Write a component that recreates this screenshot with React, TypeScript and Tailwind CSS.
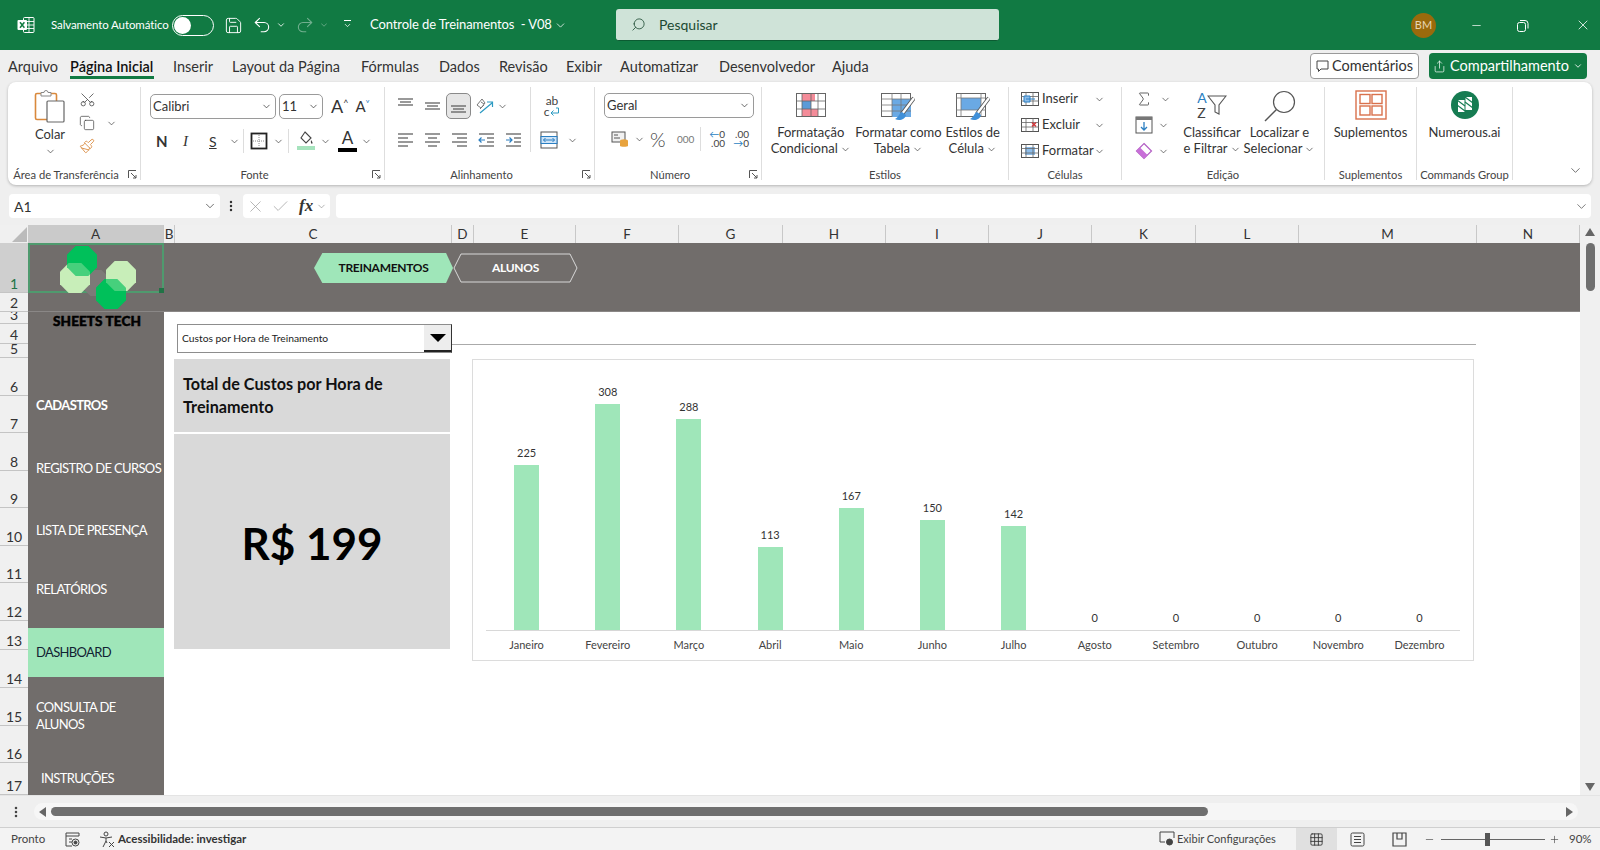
import {
  Check,
  ChevronDown,
  Copy,
  Grid3x3,
  Minus,
  MoreVertical,
  Paintbrush,
  Plus,
  Redo2,
  Save,
  Scissors,
  Search,
  Share,
  Sigma,
  Undo2,
  X,
} from "lucide-react";

const tabs = [
  { label: "Arquivo", width: "w-[62px]" },
  { label: "Página Inicial", width: "w-[103px]", active: true },
  { label: "Inserir", width: "w-[59px]" },
  { label: "Layout da Página", width: "w-[129px]" },
  { label: "Fórmulas", width: "w-[78px]" },
  { label: "Dados", width: "w-[60px]" },
  { label: "Revisão", width: "w-[67px]" },
  { label: "Exibir", width: "w-[54px]" },
  { label: "Automatizar", width: "w-[99px]" },
  { label: "Desenvolvedor", width: "w-[113px]" },
  { label: "Ajuda", width: "w-[56px]" },
];

const columns = [
  { name: "A", width: "w-[136px]", active: true },
  { name: "B", width: "w-[11px]" },
  { name: "C", width: "w-[277px]" },
  { name: "D", width: "w-[22px]" },
  { name: "E", width: "w-[102px]" },
  { name: "F", width: "w-[103px]" },
  { name: "G", width: "w-[104px]" },
  { name: "H", width: "w-[103px]" },
  { name: "I", width: "w-[103px]" },
  { name: "J", width: "w-[103px]" },
  { name: "K", width: "w-[104px]" },
  { name: "L", width: "w-[103px]" },
  { name: "M", width: "w-[178px]" },
  { name: "N", width: "w-[103px]" },
];

const rows = [
  { n: 1, h: "h-[50px]" },
  { n: 2, h: "h-[19px]" },
  { n: 3, h: "h-[12px]" },
  { n: 4, h: "h-[20px]" },
  { n: 5, h: "h-[14px]" },
  { n: 6, h: "h-[38px]" },
  { n: 7, h: "h-[37px]" },
  { n: 8, h: "h-[38px]" },
  { n: 9, h: "h-[37px]" },
  { n: 10, h: "h-[38px]" },
  { n: 11, h: "h-[37px]" },
  { n: 12, h: "h-[38px]" },
  { n: 13, h: "h-[29px]" },
  { n: 14, h: "h-[38px]" },
  { n: 15, h: "h-[38px]" },
  { n: 16, h: "h-[37px]" },
  { n: 17, h: "h-[32px]" },
];

const months = [
  { name: "Janeiro", value: 225 },
  { name: "Fevereiro", value: 308 },
  { name: "Março", value: 288 },
  { name: "Abril", value: 113 },
  { name: "Maio", value: 167 },
  { name: "Junho", value: 150 },
  { name: "Julho", value: 142 },
  { name: "Agosto", value: 0 },
  { name: "Setembro", value: 0 },
  { name: "Outubro", value: 0 },
  { name: "Novembro", value: 0 },
  { name: "Dezembro", value: 0 },
];

function Chev({ className = "text-[#444]" }: { className?: string }) {
  return <ChevronDown size={11} strokeWidth={1.6} className={`shrink-0 ${className}`} />;
}

// short horizontal strokes, used by all the alignment buttons: [x1, x2, y]
function Lines({ segs, arrow }: { segs: number[][]; arrow?: string }) {
  return (
    <svg width="17" height="16" viewBox="0 0 17 16" fill="none" stroke="#555" strokeWidth="1.2">
      {segs.map(([a, b, y]) => (
        <line key={y} x1={a} x2={b} y1={y} y2={y} />
      ))}
      {arrow ? <path d={arrow} stroke="#2b7fc2" strokeWidth="1.2" /> : null}
    </svg>
  );
}

function ExcelLogo() {
  return (
    <svg width="18" height="18" viewBox="0 0 18 18">
      <rect x="6.5" y="1.5" width="10.5" height="15" rx="1" fill="none" stroke="#fff" />
      <path d="M7 5.5h10M7 9h10M7 12.5h10M12 2v14" stroke="#fff" strokeWidth="0.9" />
      <rect x="0.5" y="4" width="9.5" height="10" rx="1" fill="#fff" />
      <path d="M3 6.2l4.4 5.6M7.4 6.2L3 11.8" stroke="#107c41" strokeWidth="1.5" />
    </svg>
  );
}

function PasteIcon() {
  return (
    <svg width="32" height="34" viewBox="0 0 32 34" fill="none">
      <rect x="1.5" y="4.5" width="21" height="26" rx="1.5" stroke="#d9893c" strokeWidth="1.6" fill="#fff" />
      <path d="M7 7V3.5h3a2 2 0 014 0h3V7z" stroke="#888" fill="#fff" />
      <rect x="13" y="12" width="17" height="21" rx="1" stroke="#666" strokeWidth="1.2" fill="#fff" />
    </svg>
  );
}

function BorderIcon() {
  return (
    <svg width="18" height="18" viewBox="0 0 18 18" fill="none">
      <rect x="1.5" y="1.5" width="15" height="15" stroke="#222" strokeWidth="1.8" />
      <path d="M9 3v12M3 9h12" stroke="#888" strokeDasharray="1 1" />
    </svg>
  );
}

function FillIcon() {
  return (
    <svg width="18" height="20" viewBox="0 0 18 20" fill="none">
      <path d="M8 1l6 6-5 5-5-5z" stroke="#444" strokeWidth="1.1" />
      <path d="M14 9c1 1.5 2 2.6 1.4 3.4-.6.7-2 .3-1.4-3.4z" fill="#444" />
      <rect x="0" y="15" width="18" height="4" fill="#a6e3bd" />
    </svg>
  );
}

function FontColorIcon() {
  return (
    <div className="flex h-[22px] w-[19px] flex-col items-center">
      <span className="text-[17px] leading-[16px] text-[#333]">A</span>
      <span className="mt-[2px] h-[4px] w-full bg-black" />
    </div>
  );
}

function OrientIcon() {
  return (
    <svg width="18" height="18" viewBox="0 0 18 18" fill="none">
      <path d="M1 8l5-6 3 4-4 5zM5 5l3 2M4 12l4-4" stroke="#777" strokeWidth="1" />
      <path d="M4 16L16 6M11 5h5.500v5" stroke="#2b9ac2" strokeWidth="1.2" />
    </svg>
  );
}

function WrapIcon() {
  return (
    <div className="flex flex-col items-center text-[12px] leading-[11px] text-[#444]">
      <span>ab</span>
      <span className="flex items-center">
        c
        <svg width="11" height="10" viewBox="0 0 11 10" fill="none">
          <path d="M7 1h2.500v5H2M4.500 3.500L2 6l2.500 2.500" stroke="#2b9ac2" />
        </svg>
      </span>
    </div>
  );
}

function MergeIcon() {
  return (
    <svg width="18" height="18" viewBox="0 0 18 18" fill="none">
      <rect x="1" y="1" width="16" height="16" stroke="#555" />
      <rect x="1" y="5.5" width="16" height="7" fill="#cfe4f7" stroke="#2b7fc2" />
      <path d="M3.5 9h11M5.5 7l-2 2 2 2M12.5 7l2 2-2 2" stroke="#2b7fc2" />
    </svg>
  );
}

function CurrencyIcon() {
  return (
    <svg width="18" height="18" viewBox="0 0 18 18" fill="none">
      <rect x="1" y="2" width="13" height="10" stroke="#555" fill="#f1f1f1" />
      <path d="M3 5h4M3 8h6" stroke="#555" />
      <ellipse cx="13" cy="11" rx="4" ry="1.8" fill="#e8a33d" />
      <path d="M9 11v5c0 1 8 1 8 0v-5" fill="#e8a33d" />
    </svg>
  );
}

function DecimalIcon({ flip }: { flip?: boolean }) {
  return (
    <div className="flex flex-col text-[10px] leading-[9px] text-[#444]">
      <span className="flex items-center justify-end">
        {flip ? ".00" : <><span className="text-[#2b7fc2]">←</span>0</>}
      </span>
      <span className="flex items-center justify-end">
        {flip ? <><span className="text-[#2b7fc2]">→</span>0</> : ".00"}
      </span>
    </div>
  );
}

function CondFormatIcon() {
  return (
    <svg width="30" height="24" viewBox="0 0 30 24" fill="none" className="mt-[3px]">
      <rect x="0.5" y="0.5" width="29" height="23" fill="#fff" stroke="#666" />
      <rect x="6" y="1" width="13" height="7" fill="#f48c99" />
      <rect x="6" y="8" width="9" height="8" fill="#5b9bd8" />
      <rect x="6" y="16" width="16" height="7" fill="#f48c99" />
      <path d="M0 8h30M0 16h30M6 0v24M15 0v24M22 0v24" stroke="#666" strokeWidth="0.8" />
    </svg>
  );
}

function Brush() {
  return (
    <>
      <path d="M33 5L21 21" stroke="#555" strokeWidth="4" />
      <path d="M33 5L21 21" stroke="#fff" strokeWidth="2.4" />
      <path d="M21 19c-3 1-3 5-7 7 4 2 10 1 11-4z" fill="#3f8fd8" />
    </>
  );
}

function TableIcon() {
  return (
    <svg width="34" height="28" viewBox="0 0 34 28" fill="none" className="mt-[3px]">
      <rect x="0.5" y="0.5" width="29" height="23" fill="#fff" stroke="#666" />
      <rect x="11" y="6" width="19" height="18" fill="#6aa9e4" />
      <path d="M0 6h30M0 12h30M0 18h30M11 0v24M20 0v24" stroke="#777" strokeWidth="0.8" />
      <Brush />
    </svg>
  );
}

function CellStyleIcon() {
  return (
    <svg width="34" height="28" viewBox="0 0 34 28" fill="none" className="mt-[3px]">
      <rect x="0.5" y="0.5" width="29" height="23" fill="#fff" stroke="#666" />
      <rect x="5" y="5" width="20" height="12" fill="#6aa9e4" />
      <path d="M0 5h30M5 0v24M25 0v24M0 17h30" stroke="#777" strokeWidth="0.8" />
      <Brush />
    </svg>
  );
}

function CellOpIcon({ kind }: { kind: "insert" | "delete" | "format" }) {
  return (
    <svg width="18" height="18" viewBox="0 0 18 18" fill="none">
      <rect x="0.5" y="2.500" width="17" height="13" fill="#fff" stroke="#555" />
      {kind === "format" ? <rect x="4" y="5" width="10" height="8" fill="#8dbdea" /> : null}
      <path d="M0 6.500h18M0 11h18M5 2v14M12 2v14" stroke="#666" strokeWidth="0.8" />
      {kind === "insert" ? <path d="M9 6h-6v6h6zM5 9h9" fill="#8dbdea" stroke="#2b7fc2" /> : null}
      {kind === "delete" ? <path d="M11 6.500l4 4M15 6.500l-4 4" stroke="#d13438" strokeWidth="1.4" /> : null}
    </svg>
  );
}

function FillDownIcon() {
  return (
    <svg width="18" height="18" viewBox="0 0 18 18" fill="none">
      <rect x="1" y="1" width="16" height="16" stroke="#555" fill="#fff" />
      <rect x="1" y="1" width="16" height="3" fill="#777" />
      <path d="M9 6v8M6 11l3 3 3-3" stroke="#2b7fc2" strokeWidth="1.3" />
    </svg>
  );
}

function EraserIcon() {
  return (
    <svg width="18" height="18" viewBox="0 0 18 18" fill="none">
      <path d="M9 1.500l7.500 7.500L9 16.500 1.500 9z" fill="#fff" stroke="#b35fc4" strokeWidth="1.2" />
      <path d="M5 5.500L1.500 9 9 16.500 12.500 13z" fill="#c86fd8" />
    </svg>
  );
}

function SortIcon() {
  return (
    <div className="flex items-center">
      <div className="flex flex-col text-[14px] leading-[15px]">
        <span className="text-[#2b7fc2]">A</span>
        <span className="text-[#444]">Z</span>
      </div>
      <svg width="20" height="24" viewBox="0 0 20 24" fill="none">
        <path d="M1 3h18l-7 9v9l-4-2v-7z" stroke="#555" strokeWidth="1.1" />
      </svg>
    </div>
  );
}

function FindIcon() {
  return (
    <svg width="34" height="32" viewBox="0 0 34 32" fill="none">
      <circle cx="21" cy="12" r="10.500" stroke="#555" strokeWidth="1.2" />
      <path d="M13.500 19.500L2 31" stroke="#555" strokeWidth="1.4" />
    </svg>
  );
}

function AddinsIcon() {
  return (
    <svg width="32" height="30" viewBox="0 0 32 30" fill="none" stroke="#d9714c" strokeWidth="1.4">
      <rect x="1" y="1" width="30" height="28" />
      <rect x="5" y="4.500" width="10" height="9" />
      <rect x="17" y="4.500" width="10" height="9" />
      <rect x="5" y="16" width="10" height="9" />
      <rect x="17" y="16" width="10" height="9" />
    </svg>
  );
}

function NumerousIcon() {
  return (
    <svg width="28" height="28" viewBox="0 0 28 28" fill="none" className="mt-[1px]">
      <circle cx="14" cy="14" r="14" fill="#167c52" />
      <rect x="7" y="9" width="6.500" height="12" fill="#fff" />
      <rect x="14.500" y="6" width="6.500" height="13" fill="#fff" />
      <path d="M6 9l8 6M6 14l8 6M14 6l8 6M14 11l8 6" stroke="#167c52" strokeWidth="1.1" />
    </svg>
  );
}

function Launcher() {
  return (
    <svg width="9" height="9" viewBox="0 0 9 9" fill="none" stroke="#555" className="shrink-0">
      <path d="M.5 8V.5H8M3 3l5 5M8 5v3H5" />
    </svg>
  );
}

function Group({
  width,
  label,
  launcher,
  children,
}: {
  width: string;
  label: string;
  launcher?: boolean;
  children: React.ReactNode;
}) {
  return (
    <div className={`flex h-[93px] flex-col border-r border-[#dedede] ${width}`}>
      <div className="h-[81px] shrink-0">{children}</div>
      <div className={`relative flex h-[14px] shrink-0 items-center justify-center whitespace-nowrap text-[11.200px] text-[#444] ${launcher ? "pr-[16px]" : ""}`}>
        {label}
        {launcher ? (
          <span className="absolute right-[3px] top-[2px]">
            <Launcher />
          </span>
        ) : null}
      </div>
    </div>
  );
}

function Select({ value, width }: { value: string; width: string }) {
  return (
    <div className={`flex h-[25px] items-center justify-between rounded-[5px] border border-[#9a9a9a] pl-[2px] pr-[3px] text-[13px] text-[#333] ${width}`}>
      {value}
      <Chev className="text-[#333]" />
    </div>
  );
}

function BigButton({
  width,
  icon,
  lines,
  more = true,
}: {
  width: string;
  icon: React.ReactNode;
  lines: string[];
  more?: boolean;
}) {
  return (
    <div className={`flex flex-col items-center pt-[3px] ${width}`}>
      <div className="flex h-[35px] items-start justify-center">{icon}</div>
      {lines.map((line, i) => (
        <div key={line} className="flex h-[16px] items-center gap-[2px] whitespace-nowrap text-[13px] text-[#333]">
          {line}
          {more && i === lines.length - 1 ? <Chev /> : null}
        </div>
      ))}
    </div>
  );
}

function Ribbon() {
  return (
    <div className="mx-[8px] flex h-[103px] items-start rounded-[8px] bg-white pt-[5px] shadow-[0_1px_3px_rgba(0,0,0,0.25)]">
      <Group width="w-[133px]" label="Área de Transferência" launcher>
        <div className="flex pl-[14px] pt-[2px]">
          <div className="flex w-[56px] flex-col items-center">
            <PasteIcon />
            <span className="mt-[3px] text-[13px] leading-[16px] text-[#333]">Colar</span>
            <Chev className="mt-[4px] text-[#444]" />
          </div>
          <div className="flex flex-col gap-[7px] pl-[1px] pt-[2px] text-[#444]">
            <Scissors size={17} strokeWidth={1.1} className="-rotate-90" />
            <div className="flex items-center gap-[11px]">
              <Copy size={16} strokeWidth={1.1} />
              <Chev />
            </div>
            <Paintbrush size={16} strokeWidth={1.3} className="text-[#d9893c]" />
          </div>
        </div>
      </Group>

      <Group width="w-[244px]" label="Fonte" launcher>
        <div className="flex items-center pl-[9px] pt-[6px]">
          <Select value="Calibri" width="w-[126px]" />
          <div className="w-[3px]" />
          <Select value="11" width="w-[44px]" />
          <span className="ml-[8px] text-[18px] text-[#333]">A</span>
          <span className="mb-[7px] text-[9px] text-[#333]">^</span>
          <span className="ml-[7px] text-[15px] text-[#333]">A</span>
          <span className="mb-[5px] text-[9px] text-[#2b7fc2]">˅</span>
        </div>
        <div className="mt-[9px] flex h-[24px] items-center pl-[15px] text-[#333]">
          <span className="w-[27px] text-[15px] font-bold">N</span>
          <span className="w-[26px] font-['Liberation_Serif',serif] text-[15px] italic">I</span>
          <span className="w-[20px] text-[14px] underline">S</span>
          <Chev />
          <div className="ml-[3px] mr-[1px] h-[24px] border-l border-[#ddd]" />
          <span className="ml-[5px] mr-[5px]"><BorderIcon /></span>
          <Chev />
          <div className="ml-[4px] h-[24px] border-l border-[#ddd]" />
          <span className="ml-[8px] mr-[5px]"><FillIcon /></span>
          <Chev />
          <span className="ml-[7px] mr-[4px]"><FontColorIcon /></span>
          <Chev />
        </div>
      </Group>

      <Group width="w-[210px]" label="Alinhamento" launcher>
        <div className="flex">
          <div className="w-[146px] border-r border-[#ddd] pl-[7px] pt-[5px]">
            <div className="flex h-[28px] items-center">
              <div className="flex w-[27px] justify-center"><Lines segs={[[1, 16, 1], [3, 14, 4], [1, 16, 7]]} /></div>
              <div className="flex w-[27px] justify-center"><Lines segs={[[1, 16, 5], [3, 14, 8], [1, 16, 11]]} /></div>
              <div className="flex h-[26px] w-[25px] items-center justify-center rounded-[5px] border border-[#8a8a8a] bg-[#e6e6e6]">
                <Lines segs={[[1, 16, 8], [3, 14, 11], [1, 16, 14]]} />
              </div>
              <div className="ml-[5px] mr-[3px]"><OrientIcon /></div>
              <Chev />
            </div>
            <div className="mt-[8px] flex h-[24px] items-center">
              <div className="flex w-[27px] justify-center"><Lines segs={[[1, 16, 2], [1, 11, 6], [1, 16, 10], [1, 11, 14]]} /></div>
              <div className="flex w-[27px] justify-center"><Lines segs={[[1, 16, 2], [4, 13, 6], [1, 16, 10], [4, 13, 14]]} /></div>
              <div className="flex w-[27px] justify-center"><Lines segs={[[1, 16, 2], [6, 16, 6], [1, 16, 10], [6, 16, 14]]} /></div>
              <div className="flex w-[27px] justify-center"><Lines segs={[[1, 16, 2], [9, 16, 6], [9, 16, 10], [1, 16, 14]]} arrow="M7 8H1M3.500 5.500L1 8l2.500 2.500" /></div>
              <div className="flex w-[27px] justify-center"><Lines segs={[[1, 16, 2], [9, 16, 6], [9, 16, 10], [1, 16, 14]]} arrow="M1 8h6M4.500 5.500L7 8l-2.500 2.500" /></div>
            </div>
          </div>
          <div className="pl-[9px] pt-[8px]">
            <div className="flex h-[22px] w-[24px] items-center justify-center"><WrapIcon /></div>
            <div className="mt-[11px] flex h-[24px] items-center gap-[9px]">
              <MergeIcon />
              <Chev />
            </div>
          </div>
        </div>
      </Group>

      <Group width="w-[167px]" label="Número" launcher>
        <div className="pl-[9px] pt-[6px]">
          <Select value="Geral" width="w-[150px]" />
          <div className="mt-[9px] flex h-[24px] items-center text-[#444]">
            <span className="ml-[7px] mr-[5px]"><CurrencyIcon /></span>
            <Chev />
            <span className="ml-[5px] w-[27px] text-[20px] font-light leading-[20px]">%</span>
            <span className="w-[23px] text-[10px] text-[#777]">000</span>
            <div className="mr-[6px] h-[24px] border-l border-[#ddd]" />
            <span className="w-[18px]"><DecimalIcon /></span>
            <span className="w-[24px]"><DecimalIcon flip /></span>
          </div>
        </div>
      </Group>

      <Group width="w-[247px]" label="Estilos">
        <div className="flex">
          <BigButton width="w-[98px]" icon={<CondFormatIcon />} lines={["Formatação", "Condicional"]} />
          <BigButton width="w-[78px]" icon={<TableIcon />} lines={["Formatar como", "Tabela"]} />
          <BigButton width="w-[71px]" icon={<CellStyleIcon />} lines={["Estilos de", "Célula"]} />
        </div>
      </Group>

      <Group width="w-[113px]" label="Células">
        <div className="flex flex-col gap-[8px] pl-[12px] pt-[3px] text-[13px] text-[#333]">
          <div className="flex h-[18px] items-center">
            <CellOpIcon kind="insert" />
            <span className="ml-[3px] w-[47px]">Inserir</span>
            <Chev className="ml-[5px] text-[#444]" />
          </div>
          <div className="flex h-[18px] items-center">
            <CellOpIcon kind="delete" />
            <span className="ml-[3px] w-[47px]">Excluir</span>
            <Chev className="ml-[5px] text-[#444]" />
          </div>
          <div className="flex h-[18px] items-center">
            <CellOpIcon kind="format" />
            <span className="ml-[3px] w-[52px]">Formatar</span>
            <Chev />
          </div>
        </div>
      </Group>

      <Group width="w-[203px]" label="Edição">
        <div className="flex">
          <div className="flex w-[56px] flex-col gap-[8px] pl-[13px] pt-[3px]">
            <div className="flex h-[18px] items-center gap-[7px]">
              <Sigma size={18} strokeWidth={1.1} className="text-[#444]" />
              <Chev />
            </div>
            <div className="flex h-[18px] items-center gap-[5px]">
              <FillDownIcon />
              <Chev />
            </div>
            <div className="flex h-[18px] items-center gap-[5px]">
              <EraserIcon />
              <Chev />
            </div>
          </div>
          <BigButton width="w-[68px]" icon={<SortIcon />} lines={["Classificar", "e Filtrar"]} />
          <BigButton width="w-[67px]" icon={<FindIcon />} lines={["Localizar e", "Selecionar"]} />
        </div>
      </Group>

      <Group width="w-[92px]" label="Suplementos">
        <BigButton width="w-full" icon={<AddinsIcon />} lines={["Suplementos"]} more={false} />
      </Group>

      <Group width="w-[96px]" label="Commands Group">
        <BigButton width="w-full" icon={<NumerousIcon />} lines={["Numerous.ai"]} more={false} />
      </Group>

      <div className="flex h-[93px] flex-1 items-end justify-end pb-[2px] pr-[9px]">
        <ChevronDown size={15} strokeWidth={1.2} className="text-[#444]" />
      </div>
    </div>
  );
}

function TitleBar() {
  return (
    <div className="flex h-[50px] shrink-0 items-center bg-[#117a43] text-white">
      <div className="ml-[17px]">
        <ExcelLogo />
      </div>
      <span className="ml-[16px] w-[115px] whitespace-nowrap text-[11.500px] tracking-[-0.1px]">Salvamento Automático</span>
      <div className="ml-[6px] flex h-[21px] w-[42px] items-center rounded-full border border-white pl-[1px]">
        <div className="h-[17px] w-[17px] rounded-full bg-white" />
      </div>
      <Save size={19} strokeWidth={1.2} className="ml-[10px]" />
      <Undo2 size={20} strokeWidth={1.3} className="ml-[9px]" />
      <ChevronDown size={10} className="ml-[4px]" />
      <Redo2 size={20} strokeWidth={1.3} className="ml-[9px] opacity-40" />
      <ChevronDown size={10} className="ml-[4px] opacity-40" />
      <div className="ml-[13px] flex w-[10px] flex-col items-center">
        <span className="h-px w-[7px] bg-white" />
        <ChevronDown size={9} />
      </div>
      <span className="ml-[18px] w-[181px] whitespace-nowrap text-[13px] tracking-[-0.1px]">Controle de Treinamentos &nbsp;- V08</span>
      <ChevronDown size={13} strokeWidth={1.4} className="ml-[3px]" />
      <div className="ml-[49px] flex h-[32px] w-[383px] items-center rounded-[3px] border-b border-[#0c5b32] bg-[#cfe3d8] pl-[15px] text-[#1c4a33]">
        <Search size={15} strokeWidth={1.3} className="-scale-x-100" />
        <span className="ml-[13px] text-[14px]">Pesquisar</span>
      </div>
      <div className="ml-[412px] flex h-[25px] w-[25px] items-center justify-center rounded-full bg-[#9a6a0c] text-[11px] text-[#e6d6b4]">
        BM
      </div>
      <Minus size={13} strokeWidth={1.3} className="ml-[34px]" />
      <svg width="13" height="13" viewBox="0 0 13 13" fill="none" stroke="#fff" className="ml-[33px]">
        <rect x="1.500" y="3.500" width="8" height="9" rx="2" />
        <path d="M4 1.500h5a3 3 0 013 3v5" />
      </svg>
      <X size={16} strokeWidth={1.2} className="ml-[46px]" />
    </div>
  );
}

function TabsRow() {
  return (
    <div className="flex h-[32px] shrink-0 items-center pl-[8px] text-[14.500px] text-[#333]">
      {tabs.map((tab) => (
        <div key={tab.label} className={`relative flex h-[32px] items-center pt-[2px] ${tab.width}`}>
          <span className={tab.active ? "font-semibold text-[#111]" : ""}>{tab.label}</span>
          {tab.active ? <span className="absolute bottom-[3px] left-0 h-[3px] w-[84px] bg-[#117a43]" /> : null}
        </div>
      ))}
      <div className="ml-auto mr-[13px] flex items-center gap-[10px]">
        <div className="flex h-[26px] w-[109px] items-center justify-center gap-[3px] rounded-[4px] border border-[#9a9a9a] bg-white">
          <svg width="13" height="14" viewBox="0 0 13 14" fill="none" stroke="#444">
            <path d="M1 2h11v8H5l-2.500 2.500V10H1z" />
          </svg>
          <span>Comentários</span>
        </div>
        <div className="flex h-[26px] w-[158px] items-center justify-center gap-[4px] rounded-[4px] bg-[#117a43] text-white">
          <Share size={13} strokeWidth={1.3} />
          <span>Compartilhamento</span>
          <ChevronDown size={10} />
        </div>
      </div>
    </div>
  );
}

function FormulaBar() {
  return (
    <div className="mx-[9px] mt-[9px] flex h-[24px] shrink-0 items-center text-[#444]">
      <div className="flex h-full w-[211px] items-center justify-between rounded-[4px] bg-white pl-[5px] pr-[3px] text-[14px] text-[#333]">
        A1
        <ChevronDown size={14} strokeWidth={1.2} />
      </div>
      <MoreVertical size={14} strokeWidth={2.2} className="ml-[4px] text-[#333]" />
      <div className="ml-[5px] flex h-full w-[87px] items-center rounded-[4px] bg-white pl-[3px]">
        <X size={19} strokeWidth={0.9} className="text-[#999]" />
        <Check size={19} strokeWidth={0.9} className="ml-[6px] text-[#999]" />
        <span className="ml-[9px] font-['Liberation_Serif',serif] text-[17px] font-bold italic text-[#333]">fx</span>
        <ChevronDown size={11} strokeWidth={1.2} className="ml-[3px] text-[#777]" />
      </div>
      <div className="ml-[6px] flex h-full flex-1 items-center justify-end rounded-[4px] bg-white pr-[2px]">
        <ChevronDown size={15} strokeWidth={1.1} />
      </div>
    </div>
  );
}

// regular octagon points around a centre
function octagon(cx: number, cy: number, r: number) {
  const k = r * 0.42;
  return [
    [cx - k, cy - r], [cx + k, cy - r], [cx + r, cy - k], [cx + r, cy + k],
    [cx + k, cy + r], [cx - k, cy + r], [cx - r, cy + k], [cx - r, cy - k],
  ].join(" ");
}

function Logo() {
  return (
    <svg width="136" height="70" viewBox="0 0 136 70" className="pointer-events-none absolute left-0 top-0">
      <polygon points={octagon(68, 40, 13)} fill="#7d7a78" />
      <polygon points={octagon(54, 18, 15)} fill="#00c05a" />
      <polygon points={octagon(83, 51, 15)} fill="#00c05a" />
      <polygon points={octagon(47, 35, 15)} fill="#c8eeb9" />
      <polygon points={octagon(93, 33, 15)} fill="#c8eeb9" />
      <polygon points={octagon(54, 18, 15)} fill="#00c05a" opacity="0.65" />
      <polygon points={octagon(83, 51, 15)} fill="#00c05a" opacity="0.65" />
    </svg>
  );
}

function Sidebar() {
  const item = "flex shrink-0 items-center whitespace-nowrap pl-[8px] text-[13px] tracking-[-0.65px]";
  return (
    <div className="relative flex h-[552px] w-[136px] shrink-0 flex-col overflow-hidden bg-[#716d6b] text-white">
      <div className="absolute left-0 top-0 h-[50px] w-[136px] border-2 border-[#4f9a6e]">
        <span className="absolute -bottom-[2px] -right-[2px] h-[5px] w-[5px] bg-[#217346]" />
      </div>
      <div className="absolute left-0 top-[68px] h-px w-[136px] bg-[#8a8786]" />
      <Logo />
      <div className="flex h-[131px] shrink-0 flex-col items-center justify-end pb-[46px]">
        <span className="pl-[2px] text-[13.500px] font-black leading-none tracking-[0.1px] text-black [-webkit-text-stroke:0.5px_black]">SHEETS TECH</span>
      </div>
      <div className={`${item} h-[64px] font-bold`}>CADASTROS</div>
      <div className={`${item} h-[62px]`}>REGISTRO DE CURSOS</div>
      <div className={`${item} h-[62px]`}>LISTA DE PRESENÇA</div>
      <div className={`${item} h-[56px]`}>RELATÓRIOS</div>
      <div className="h-[10px] shrink-0" />
      <div className={`${item} h-[49px] bg-[#9fe6b9] text-[#123]`}>DASHBOARD</div>
      <div className={`${item} h-[77px] leading-[17px]`}>CONSULTA DE<br />ALUNOS</div>
      <div className={`${item} h-[50px] pl-[13px]`}>INSTRUÇÕES</div>
    </div>
  );
}

function NavChips() {
  return (
    <div className="flex h-[69px] shrink-0 items-start border-b border-[#8a8786] bg-[#716d6b] pl-[150px] pt-[10px] text-[12px] font-bold tracking-[-0.3px]">
      <div className="flex h-[30px] w-[139px] items-center justify-center bg-[#9fe6b9] text-[#111] [clip-path:polygon(6%_0,95%_0,100%_50%,95%_100%,6%_100%,0_50%)]">
        TREINAMENTOS
      </div>
      <div className="relative flex h-[30px] w-[125px] items-center justify-center text-white">
        <svg width="125" height="30" viewBox="0 0 125 30" fill="none" className="absolute inset-0">
          <polygon points="8,1 117,1 124,15 117,29 8,29 1,15" stroke="#d8d8d8" />
        </svg>
        <span className="relative">ALUNOS</span>
      </div>
    </div>
  );
}

function Chart() {
  return (
    <div className="flex h-[302px] w-[1002px] flex-col border border-[#dcdcdc] px-[13px]">
      <div className="grid h-[271px] shrink-0 grid-cols-12 border-b border-[#d8d8d8]">
        {months.map((m) => (
          <div key={m.name} className="flex flex-col items-center justify-end">
            <span className="mb-[5px] h-[14px] text-[11px] leading-[14px] text-[#333]">{m.value}</span>
            <div className="w-[25px] bg-[#9fe6b9]" style={{ height: m.value * 0.733 }} />
          </div>
        ))}
      </div>
      <div className="grid grid-cols-12 pt-[7px]">
        {months.map((m) => (
          <span key={m.name} className="text-center text-[11px] leading-[14px] text-[#444]">{m.name}</span>
        ))}
      </div>
    </div>
  );
}

function Dashboard() {
  return (
    <div className="flex flex-1 flex-col overflow-hidden bg-white">
      <NavChips />
      <div className="ml-[13px] mt-[12px] flex shrink-0 items-start">
        <div className="flex h-[29px] w-[275px] items-center border border-[#8d8d8d] border-r-[#333] pl-[4px] text-[10.300px] text-[#222]">
          <span className="flex-1">Custos por Hora de Treinamento</span>
          <div className="flex h-[27px] w-[27px] items-center justify-center border-b-2 border-[#222] bg-[#ededed]">
            <span className="border-x-[8px] border-t-[8px] border-x-transparent border-t-black" />
          </div>
        </div>
        <div className="h-[21px] w-[1024px] border-b border-[#aaa]" />
      </div>
      <div className="ml-[10px] mt-[6px] flex items-start">
        <div className="flex w-[276px] flex-col gap-[2px]">
          <div className="flex h-[73px] items-center bg-[#d9d9d9] pb-[2px] pl-[9px] text-[16.200px] font-bold leading-[23px] text-[#111]">
            <span>Total de Custos por Hora de<br />Treinamento</span>
          </div>
          <div className="flex h-[215px] items-center justify-center bg-[#d9d9d9] pt-[2px] text-[44px] font-bold text-black">
            R$ 199
          </div>
        </div>
        <div className="ml-[22px]">
          <Chart />
        </div>
      </div>
    </div>
  );
}

function Spreadsheet() {
  return (
    <div className="mt-[7px] flex flex-1 overflow-hidden bg-[#f0f0f0]">
      <div className="flex w-[1580px] flex-col">
        <div className="flex h-[18px] shrink-0">
          <div className="flex w-[28px] items-end justify-end pb-[1px] pr-[1px]">
            <span className="border-b-[15px] border-l-[15px] border-b-[#bbb] border-l-transparent" />
          </div>
          {columns.map((c) => (
            <div
              key={c.name}
              className={`flex items-center justify-center border-r border-[#c8c8c8] text-[13.500px] text-[#333] ${c.width} ${c.active ? "bg-[#cacaca]" : ""}`}
            >
              {c.name}
            </div>
          ))}
        </div>
        <div className="flex h-[552px]">
          <div className="w-[28px] shrink-0">
            {rows.map((r) => (
              <div
                key={r.n}
                className={`flex items-end justify-center overflow-hidden border-b border-[#c4c4c4] text-[14px] leading-[17px] ${r.h} ${r.n === 1 ? "bg-[#cfcfcf] text-[#217346]" : "text-[#333]"}`}
              >
                {r.n}
              </div>
            ))}
          </div>
          <Sidebar />
          <Dashboard />
        </div>
      </div>
      <div className="flex w-[20px] flex-col items-center pt-[3px]">
        <span className="border-x-[5px] border-b-[8px] border-x-transparent border-b-[#666]" />
        <div className="mt-[7px] h-[48px] w-[9px] rounded-full bg-[#6f6f6f]" />
        <span className="mt-auto mb-[4px] border-x-[5px] border-t-[8px] border-x-transparent border-t-[#666]" />
      </div>
    </div>
  );
}

function HorizontalScroll() {
  return (
    <div className="flex h-[32px] shrink-0 items-center border-t border-[#e4e4e4] bg-[#efefef]">
      <MoreVertical size={14} strokeWidth={2.4} className="ml-[9px] text-[#444]" />
      <div className="ml-[11px] flex h-[17px] w-[1544px] items-center rounded-full bg-[#f6f6f6] pl-[5px] pr-[5px]">
        <span className="border-y-[5px] border-r-[7px] border-y-transparent border-r-[#666]" />
        <div className="ml-[5px] h-[9px] w-[1157px] rounded-full bg-[#6f6f6f]" />
        <span className="ml-auto border-y-[5px] border-l-[7px] border-y-transparent border-l-[#666]" />
      </div>
    </div>
  );
}

function StatusBar() {
  return (
    <div className="flex h-[23px] shrink-0 items-center whitespace-nowrap border-t border-[#cfcfcf] bg-[#f3f3f3] pl-[11px] text-[11.500px] text-[#444]">
      <span className="w-[54px]">Pronto</span>
      <svg width="15" height="15" viewBox="0 0 15 15" fill="none" stroke="#444">
        <path d="M1 1h13v3H1zM1 4v10h6M4 7h3M4 10h3" />
        <circle cx="10.500" cy="10.500" r="3.500" />
        <circle cx="10.500" cy="10.500" r="1.500" fill="#444" />
      </svg>
      <svg width="17" height="17" viewBox="0 0 17 17" fill="none" stroke="#444" className="ml-[18px]">
        <circle cx="8" cy="3" r="2" />
        <path d="M2 6l6 1 6-1M8 7v3l-3 6M8 10l1 2M11 11l5 5M16 11l-5 5" />
      </svg>
      <span className="ml-[3px] w-[130px] font-bold text-[#333]">Acessibilidade: investigar</span>
      <svg width="17" height="16" viewBox="0 0 17 16" fill="none" stroke="#444" className="ml-[911px]">
        <path d="M6 11H1V1h14v6" />
        <circle cx="10.500" cy="11" r="3" fill="#444" />
      </svg>
      <span className="ml-[1px] w-[119px] text-[11px]">Exibir Configurações</span>
      <div className="flex h-[22px] w-[41px] items-center justify-center bg-[#e0e0e0]">
        <Grid3x3 size={15} strokeWidth={1.4} className="text-[#333]" />
      </div>
      <svg width="15" height="15" viewBox="0 0 15 15" fill="none" stroke="#444" className="ml-[13px]">
        <rect x="1" y="1" width="13" height="13" rx="1.500" />
        <path d="M4 4.500h7M4 7.500h7M4 10.500h7" />
      </svg>
      <svg width="15" height="15" viewBox="0 0 15 15" fill="none" stroke="#444" strokeWidth="1.2" className="ml-[27px]">
        <path d="M1 1h13v13H1zM5 1v6h5V1" />
      </svg>
      <Minus size={11} strokeWidth={1.4} className="ml-[17px]" />
      <div className="relative ml-[6px] h-px w-[104px] bg-[#666]">
        <span className="absolute -top-[6px] left-[44px] h-[13px] w-[5px] bg-[#555]" />
      </div>
      <Plus size={11} strokeWidth={1.4} className="ml-[4px]" />
      <span className="ml-[9px]">90%</span>
    </div>
  );
}

export default function App() {
  return (
    <div className="flex h-[850px] w-[1600px] flex-col overflow-hidden bg-[#efefef] [font-family:Lato,'Liberation_Sans',sans-serif]">
      <TitleBar />
      <TabsRow />
      <Ribbon />
      <FormulaBar />
      <Spreadsheet />
      <HorizontalScroll />
      <StatusBar />
    </div>
  );
}
